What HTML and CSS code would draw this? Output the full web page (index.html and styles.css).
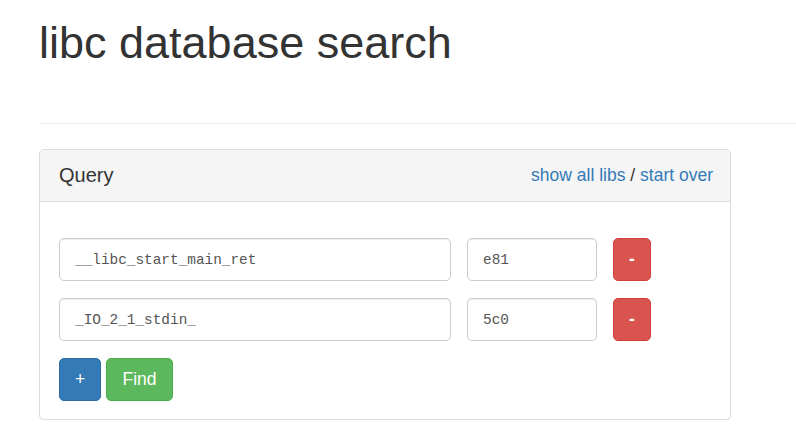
FILE: index.html
```html
<!DOCTYPE html>
<html lang="en">
<head>
<meta charset="utf-8">
<title>libc database search</title>
<link rel="stylesheet" href="styles.css">
</head>
<body>
<div class="container">
  <h1 class="title">libc database search</h1>
  <hr class="rule">
  <div class="panel">
    <div class="panel-heading">
      <span class="panel-title">Query</span>
      <span class="panel-links"><a href="#">show all libs</a> / <a href="#">start over</a></span>
    </div>
    <div class="panel-body">
      <div class="row">
        <input class="field field-name" type="text" value="__libc_start_main_ret">
        <input class="field field-addr" type="text" value="e81">
        <button class="btn btn-danger btn-remove">-</button>
      </div>
      <div class="row">
        <input class="field field-name" type="text" value="_IO_2_1_stdin_">
        <input class="field field-addr" type="text" value="5c0">
        <button class="btn btn-danger btn-remove">-</button>
      </div>
      <div class="actions">
        <button class="btn btn-primary btn-add">+</button>
        <button class="btn btn-success btn-find">Find</button>
      </div>
    </div>
  </div>
</div>
</body>
</html>
```
FILE: styles.css
```css
* { box-sizing: border-box; }
html, body { margin: 0; padding: 0; background: #fff; }
body {
  font-family: "Liberation Sans", Arial, sans-serif;
  font-size: 17.5px;
  color: #333;
  overflow: hidden;
}
.container {
  padding-left: 39px;
}
.title {
  margin: 18px 0 0;
  font-size: 45px;
  line-height: 50px;
  font-weight: 500;
  color: #333;
}
.rule {
  margin: 55px 0 0;
  border: 0;
  border-top: 1px solid #eee;
  height: 0;
}
.panel {
  margin-top: 25px;
  width: 692px;
  border: 1px solid #ddd;
  border-radius: 5px;
  background: #fff;
  box-shadow: 0 1px 1px rgba(0,0,0,0.05);
}
.panel-heading {
  height: 52px;
  display: flex;
  align-items: center;
  justify-content: space-between;
  padding: 0 17px 0 19px;
  background: #f5f5f5;
  border-bottom: 1px solid #ddd;
  border-radius: 4px 4px 0 0;
}
.panel-title {
  font-size: 20px;
  color: #333;
}
.panel-links {
  font-size: 17.5px;
  color: #333;
}
.panel-links a {
  color: #337ab7;
  text-decoration: none;
}
.panel-body {
  padding: 36px 19px 18px 19px;
  display: flex;
  flex-direction: column;
  gap: 17px;
}
.row {
  display: flex;
  gap: 16px;
}
.field {
  height: 43px;
  border: 1px solid #ccc;
  border-radius: 5px;
  padding: 10px 15px;
  font-family: "Liberation Mono", "DejaVu Sans Mono", monospace;
  font-size: 14.4px;
  line-height: 21px;
  color: #555;
  background: #fff;
  box-shadow: inset 0 1px 1px rgba(0,0,0,0.075);
  outline: none;
}
.field-name { width: 392px; }
.field-addr { width: 130px; }
.btn {
  height: 43px;
  border: 1px solid transparent;
  border-radius: 5px;
  color: #fff;
  font-family: "Liberation Sans", Arial, sans-serif;
  font-size: 17.5px;
  padding: 0;
  cursor: pointer;
}
.btn-danger {
  background: #d9534f;
  border-color: #d43f3a;
}
.btn-remove {
  width: 38px;
  font-weight: bold;
}
.actions {
  display: flex;
  gap: 5px;
}
.btn-primary {
  background: #337ab7;
  border-color: #2e6da4;
}
.btn-add { width: 42px; height: 43px; }
.btn-success {
  background: #5cb85c;
  border-color: #4cae4c;
}
.btn-find { width: 67px; height: 43px; }
```
